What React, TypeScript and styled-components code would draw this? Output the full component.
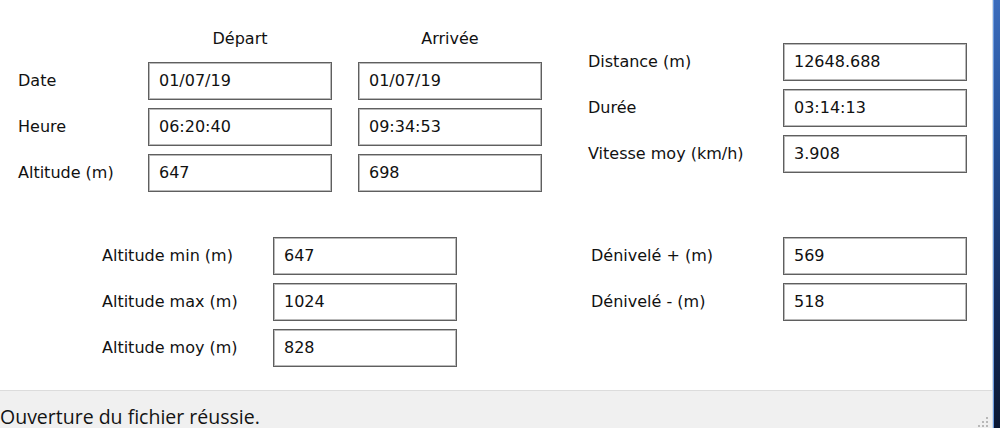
import React from 'react'
import styled, { createGlobalStyle } from 'styled-components';

const GlobalStyle = createGlobalStyle`
  html, body {
    margin: 0;
    padding: 0;
    background: #ffffff;
  }
  body {
    width: 1000px;
    height: 428px;
    overflow: hidden;
  }
`;

const Page = styled.div`
  display: flex;
  flex-direction: row;
  width: 1000px;
  height: 428px;
  overflow: hidden;
  font-family: "DejaVu Sans", Verdana, sans-serif;
  font-size: 16px;
  color: #111111;
`;

const Window = styled.div`
  display: flex;
  flex-direction: column;
  width: 992px;
  border-right: 1px solid #d3dbe6;
`;

const Desktop = styled.div`
  flex: 1;
  border-left: 1px solid #6b9be0;
  background: linear-gradient(180deg, #3b6cbc 0%, #24519a 30%, #132c5e 70%, #0a1733 100%);
`;

const Content = styled.div`
  height: 391px;
  background: #ffffff;
  border-bottom: 1px solid #dcdcdc;
  box-sizing: border-box;
  padding-top: 27px;
  display: flex;
  flex-direction: column;
`;

const Section = styled.div<{ $gap?: number }>`
  display: flex;
  flex-direction: row;
  align-items: flex-start;
  margin-top: ${p => p.$gap ?? 0}px;
`;

const FieldGrid = styled.div<{ $cols: string; $rows?: string; $left: number; $top?: number }>`
  display: grid;
  grid-template-columns: ${p => p.$cols};
  grid-template-rows: ${p => p.$rows ?? 'none'};
  grid-auto-rows: 38px;
  row-gap: 8px;
  column-gap: 26px;
  align-items: center;
  margin-left: ${p => p.$left}px;
  margin-top: ${p => p.$top ?? 0}px;
`;

const LabelGrid = styled(FieldGrid)`
  column-gap: 0;
`;

const ColHeader = styled.div`
  line-height: 24px;
  align-self: start;
  text-align: center;
`;

const Label = styled.div`
  white-space: nowrap;
  line-height: 20px;
`;

const Field = styled.div`
  height: 38px;
  box-sizing: border-box;
  border: 1px solid #5f5f5f;
  box-shadow: inset 0 0 0 1px #b9b9b9;
  background: #ffffff;
  padding: 0 10px 1px;
  display: flex;
  align-items: center;
  line-height: 20px;
  white-space: nowrap;
`;

const StatusBar = styled.div`
  flex: 1;
  position: relative;
  background: #f0f0f0;
  overflow: hidden;
  font-family: "Open Sans", "Noto Sans", sans-serif;
  font-size: 19.5px;
  line-height: 18px;
  color: #141414;
  padding-top: 17px;
  white-space: nowrap;
`;

const Grip = styled.svg`
  position: absolute;
  right: 2px;
  bottom: 0;
`;

const Spacer = styled.div``;

type Row = [string, string];

const topLeft: { label: string; dep: string; arr: string }[] = [
  { label: 'Date', dep: '01/07/19', arr: '01/07/19' },
  { label: 'Heure', dep: '06:20:40', arr: '09:34:53' },
  { label: 'Altitude (m)', dep: '647', arr: '698' },
];

const topRight: Row[] = [
  ['Distance (m)', '12648.688'],
  ['Durée', '03:14:13'],
  ['Vitesse moy (km/h)', '3.908'],
];

const altitudes: Row[] = [
  ['Altitude min (m)', '647'],
  ['Altitude max (m)', '1024'],
  ['Altitude moy (m)', '828'],
];

const denivele: Row[] = [
  ['Dénivelé + (m)', '569'],
  ['Dénivelé - (m)', '518'],
];

const Pairs = ({ rows }: { rows: Row[] }) => (
  <>
    {rows.map(([label, value]) => (
      <React.Fragment key={label}>
        <Label>{label}</Label>
        <Field>{value}</Field>
      </React.Fragment>
    ))}
  </>
);

const App = () => {
  return (
    <Page>
      <GlobalStyle />
      <Window>
        <Content>
          <Section>
            <FieldGrid $cols="104px 184px 184px" $rows="27px" $left={18}>
              <Spacer />
              <ColHeader>Départ</ColHeader>
              <ColHeader>Arrivée</ColHeader>
              {topLeft.map(r => (
                <React.Fragment key={r.label}>
                  <Label>{r.label}</Label>
                  <Field>{r.dep}</Field>
                  <Field>{r.arr}</Field>
                </React.Fragment>
              ))}
            </FieldGrid>
            <LabelGrid $cols="195px 184px" $left={46} $top={16}>
              <Pairs rows={topRight} />
            </LabelGrid>
          </Section>
          <Section $gap={45}>
            <LabelGrid $cols="171px 184px" $left={102}>
              <Pairs rows={altitudes} />
            </LabelGrid>
            <LabelGrid $cols="192px 184px" $left={134}>
              <Pairs rows={denivele} />
            </LabelGrid>
          </Section>
        </Content>
        <StatusBar>
          Ouverture du fichier réussie.
          <Grip width="12" height="12" viewBox="0 0 12 12">
            <rect x="8" y="1" width="2" height="2" fill="#b8b8b8" />
            <rect x="4" y="5" width="2" height="2" fill="#b8b8b8" />
            <rect x="8" y="5" width="2" height="2" fill="#b8b8b8" />
            <rect x="0" y="9" width="2" height="2" fill="#b8b8b8" />
            <rect x="4" y="9" width="2" height="2" fill="#b8b8b8" />
            <rect x="8" y="9" width="2" height="2" fill="#b8b8b8" />
          </Grip>
        </StatusBar>
      </Window>
      <Desktop />
    </Page>
  )
}

export default App
